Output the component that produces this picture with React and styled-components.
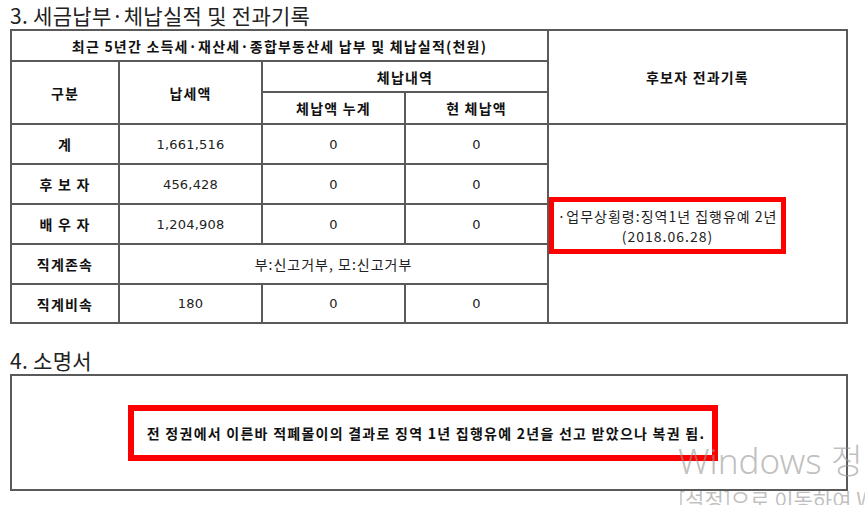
import styled, { createGlobalStyle } from "styled-components";

const GlobalStyle = createGlobalStyle`
  body {
    margin: 0;
    background: #ffffff;
    font-family: "Noto Sans CJK KR", "Liberation Sans", sans-serif;
    color: #1a1a1a;
  }
`;

const rows = [
  { label: "계", paid: "1,661,516", total: "0", current: "0" },
  { label: "후 보 자", paid: "456,428", total: "0", current: "0" },
  { label: "배 우 자", paid: "1,204,908", total: "0", current: "0" },
  { label: "직계존속", merged: "부:신고거부, 모:신고거부" },
  { label: "직계비속", paid: "180", total: "0", current: "0", last: true },
];

const App = () => {
  return (
    <>
      <GlobalStyle />
      <Page>
        <SectionTitle>3. 세금납부·체납실적 및 전과기록</SectionTitle>
        <Table>
          <colgroup>
            <col style={{ width: 108 }} />
            <col style={{ width: 143 }} />
            <col style={{ width: 143 }} />
            <col style={{ width: 143 }} />
            <col style={{ width: 299 }} />
          </colgroup>
          <tbody>
            <Row $h={31}>
              <Head colSpan={4}>최근 5년간 소득세·재산세·종합부동산세 납부 및 체납실적(천원)</Head>
              <Head rowSpan={3}>후보자 전과기록</Head>
            </Row>
            <Row $h={31}>
              <Head rowSpan={2}>구분</Head>
              <Head rowSpan={2}>납세액</Head>
              <Head colSpan={2}>체납내역</Head>
            </Row>
            <Row $h={32}>
              <Head>체납액 누계</Head>
              <Head>현 체납액</Head>
            </Row>
            {rows.map((row, index) => (
              <Row key={index} $h={row.last ? 39 : 40}>
                <Head>{row.label}</Head>
                {row.merged ? (
                  <Cell colSpan={3}>{row.merged}</Cell>
                ) : (
                  <>
                    <Num>{row.paid}</Num>
                    <Num>{row.total}</Num>
                    <Num>{row.current}</Num>
                  </>
                )}
                {index === 0 && (
                  <RecordCell rowSpan={5}>
                    <RecordMark>
                      <span>·업무상횡령:징역1년 집행유예 2년</span>
                      <span>(2018.06.28)</span>
                    </RecordMark>
                  </RecordCell>
                )}
              </Row>
            ))}
          </tbody>
        </Table>

        <SectionTitle $top={21}>4. 소명서</SectionTitle>
        <StatementBox>
          <StatementMark>
            전 정권에서 이른바 적폐몰이의 결과로 징역 1년 집행유예 2년을 선고 받았으나 복권 됨.
          </StatementMark>
        </StatementBox>
      </Page>
      <Watermark>
        <WatermarkTitle>Windows 정품 인증</WatermarkTitle>
        <WatermarkSub>[설정]으로 이동하여 Windows를 정품 인증합니다.</WatermarkSub>
      </Watermark>
    </>
  );
};

export default App;

const Page = styled.div`
  width: 865px;
  height: 505px;
  padding: 0 0 0 10px;
  box-sizing: border-box;
  overflow: hidden;
`;

const SectionTitle = styled.h2`
  margin: ${(p) => p.$top || 0}px 0 0 0;
  padding-top: 1px;
  height: 28px;
  line-height: 28px;
  font-size: 21px;
  font-weight: 400;
  letter-spacing: 0.3px;
  color: #222;
`;

const Table = styled.table`
  width: 838px;
  table-layout: fixed;
  border-collapse: collapse;
  border: 2px solid #5a5a5a;
`;

const Row = styled.tr`
  height: ${(p) => p.$h}px;
`;

const Head = styled.td`
  border: 2px solid #5a5a5a;
  padding: 0;
  text-align: center;
  vertical-align: middle;
  font-size: 14px;
  font-weight: 700;
  letter-spacing: 1.2px;
  color: #111;
`;

const Cell = styled.td`
  border: 2px solid #5a5a5a;
  padding: 0;
  text-align: center;
  vertical-align: middle;
  font-size: 14px;
  letter-spacing: 1px;
  color: #222;
`;

const Num = styled(Cell)`
  font-family: "DejaVu Sans", "Noto Sans CJK KR", sans-serif;
  font-size: 13px;
  letter-spacing: 0.2px;
`;

const RecordCell = styled.td`
  border: 2px solid #5a5a5a;
  padding: 0;
  text-align: left;
  vertical-align: middle;
`;

const RecordMark = styled.div`
  display: inline-flex;
  flex-direction: column;
  align-items: center;
  justify-content: center;
  box-sizing: border-box;
  width: 237px;
  height: 57px;
  margin: 4px 0 0 0;
  border: 5px solid #ff0000;
  font-size: 14px;
  line-height: 20px;
  letter-spacing: 1px;
  text-align: center;
  white-space: nowrap;
  color: #222;
`;

const StatementBox = styled.div`
  box-sizing: border-box;
  width: 838px;
  height: 117px;
  border: 2px solid #5a5a5a;
  display: flex;
  align-items: center;
  justify-content: center;
  padding-right: 12px;
`;

const StatementMark = styled.div`
  box-sizing: border-box;
  width: 590px;
  height: 56px;
  border: 6px solid #ff0000;
  display: flex;
  align-items: center;
  justify-content: center;
  padding-left: 6px;
  font-size: 14px;
  font-weight: 700;
  letter-spacing: 1.25px;
  white-space: nowrap;
  color: #111;
`;

const Watermark = styled.div`
  position: absolute;
  left: 678px;
  top: 436px;
  width: 187px;
  overflow: hidden;
  color: rgba(150, 150, 150, 0.6);
  white-space: nowrap;
  pointer-events: none;
`;

const WatermarkTitle = styled.div`
  font-family: "Noto Sans", "Noto Sans CJK KR", sans-serif;
  font-weight: 300;
  font-size: 35px;
  line-height: 50px;
`;

const WatermarkSub = styled.div`
  font-family: "Noto Sans CJK KR", sans-serif;
  font-size: 21px;
  line-height: 26px;
`;
